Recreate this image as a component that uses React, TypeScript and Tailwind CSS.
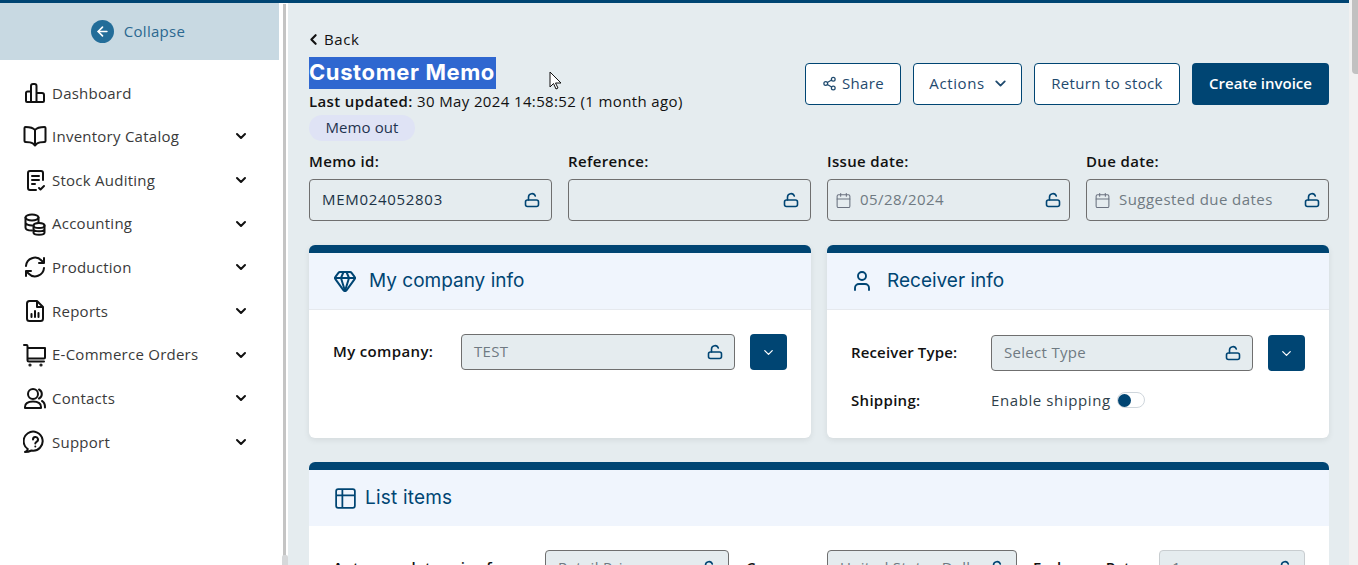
import React from "react";
import { ArrowLeft, ChevronDown, ChevronLeft, Calendar, Share2, Gem, User, Table2 } from "lucide-react";

function Ic({ children }: { children: React.ReactNode }) {
  return (
    <svg width="24" height="24" viewBox="0 0 24 24" fill="none" stroke="#111" strokeWidth="2" strokeLinecap="round" strokeLinejoin="round" className="shrink-0">
      {children}
    </svg>
  );
}

function Lock() {
  return (
    <svg width="16" height="16" viewBox="0 0 16 16" fill="none" stroke="#004573" strokeWidth="1.6" strokeLinecap="round" strokeLinejoin="round" className="shrink-0">
      <rect x="1.500" y="8" width="13" height="6.500" rx="2" />
      <path d="M4.500 8V5a3.500 3.500 0 0 1 6.800-1" />
    </svg>
  );
}

const nav: { label: string; icon: React.ReactNode; chev: boolean }[] = [
  { label: "Dashboard", chev: false, icon: <Ic><path d="M3 20V12a1.500 1.500 0 0 1 1.500-1.500H8V21H4a1 1 0 0 1-1-1ZM8 21V5a2 2 0 0 1 2-2h1.500a2 2 0 0 1 2 2v16ZM13.500 12H19a2 2 0 0 1 2 2v6a1 1 0 0 1-1 1h-6.500" /></Ic> },
  { label: "Inventory Catalog", chev: true, icon: <Ic><path d="M12 6C10 3.500 7 3 2.500 3a1 1 0 0 0-1 1v13a1 1 0 0 0 1 1c3.500 0 6 .5 7.500 1.500l2 2 2-2c1.500-1 4-1.500 7.500-1.500a1 1 0 0 0 1-1V4a1 1 0 0 0-1-1C17 3 14 3.500 12 6ZM12 6v15" /></Ic> },
  { label: "Stock Auditing", chev: true, icon: <Ic><path d="M20 12V5a2 2 0 0 0-2-2H7a2 2 0 0 0-2 2v15a2 2 0 0 0 2 2h6M9 8h7M9 12h7M9 16h3M16 20l1.500 1.500L21 18" /></Ic> },
  { label: "Accounting", chev: true, icon: <Ic><ellipse cx="9" cy="5.500" rx="6.500" ry="3" /><path d="M2.500 5.500v10c0 1.600 2.500 3 6.500 3M2.500 10.500c0 1.600 3 3 6.500 3M15.500 5.500v5" /><ellipse cx="16" cy="13.500" rx="5.500" ry="2.600" /><path d="M10.500 13.500v7c0 1.300 2.500 2.300 5.500 2.300s5.500-1 5.500-2.300v-7M10.500 17c0 1.300 2.500 2.300 5.500 2.300s5.500-1 5.500-2.300" /></Ic> },
  { label: "Production", chev: true, icon: <Ic><path d="M3 11a9 9 0 0 1 15.500-5.500L21 8M21 3v5h-5M21 13a9 9 0 0 1-15.500 5.500L3 16M3 21v-5h5" /></Ic> },
  { label: "Reports", chev: true, icon: <Ic><path d="M14 2H6.500A2.500 2.500 0 0 0 4 4.500v15A2.500 2.500 0 0 0 6.500 22h11a2.500 2.500 0 0 0 2.500-2.500V8ZM14 2v6h6M8.500 18v-3M12 18v-6M15.500 18v-4" /></Ic> },
  { label: "E-Commerce Orders", chev: true, icon: <Ic><path d="M1 2h2.500a1 1 0 0 1 1 1v14a1.500 1.500 0 0 0 1.500 1.500h15M4.500 5H22v9.500a1 1 0 0 1-1 1H4.500" /><circle cx="7" cy="22" r=".6" fill="#111" /><circle cx="18" cy="22" r=".6" fill="#111" /></Ic> },
  { label: "Contacts", chev: true, icon: <Ic><circle cx="10" cy="8" r="5" /><path d="M2 22v-1c0-3.500 3-5.500 8-5.500s8 2 8 5.500v1ZM16 3.500a5 5 0 0 1 0 9M19 15c2 1 3 3 3 6.500" /></Ic> },
  { label: "Support", chev: true, icon: <Ic><path d="M2 22c1.500-.5 2.500-1.500 2.800-3A9.500 9.500 0 1 1 8.500 20.500C6.500 21.500 4 22 2 22Z" /><path d="M10 9.500a2.500 2.500 0 1 1 3.500 2.300c-.7.4-1.200.9-1.200 1.700M12.300 16.500v.01" /></Ic> },
];

function Field({ label, value, calendar, muted }: { label: string; value: string; calendar?: boolean; muted?: boolean }) {
  return (
    <div className="w-[243px] shrink-0">
      <div className="h-[22px] text-[15px] leading-[22px] font-semibold text-[#111] tracking-[0.35px]">{label}</div>
      <div className={`mt-[7px] h-[42px] rounded-[4px] border border-[#6f6f6f] flex items-center pl-3 ${calendar ? "pr-[8px]" : "pr-[11px]"}`}>
        {calendar && <Calendar size={17} strokeWidth={1.5} className="text-[#6b7280] mr-[8px] -ml-[5px] shrink-0" />}
        <span className={`flex-1 truncate pb-[2px] text-[15px] ${calendar ? "tracking-[0.45px]" : "tracking-[0.7px]"} ${muted ? "text-[#6f7a82]" : "text-[#1c3346]"}`}>{value}</span>
        <Lock />
      </div>
    </div>
  );
}

function Btn({ children, w }: { children: React.ReactNode; w: string }) {
  return (
    <button className={`${w} h-[42px] pb-[2px] rounded-[4px] border border-[#004573] bg-white text-[#1f4a6e] text-[15px] tracking-[0.35px] flex items-center justify-center`}>
      {children}
    </button>
  );
}

function SelectRow({ label, value, labelW, boxW, track }: { label: string; value: string; labelW: string; boxW: string; track: string }) {
  return (
    <div className="flex items-center">
      <div className={`${labelW} ${track} shrink-0 pb-[2px] text-[15px] font-semibold text-[#111]`}>{label}</div>
      <div className={`${boxW} h-[36px] shrink-0 rounded-[4px] border border-[#6f6f6f] bg-[#e5ecef] flex items-center pl-3 pr-[11px]`}>
        <span className="flex-1 pb-[2px] text-[15px] text-[#6f7a82] tracking-[0.3px]">{value}</span>
        <Lock />
      </div>
      <div className="ml-[15px] w-[37px] h-[36px] rounded-[4px] bg-[#004573] flex items-center justify-center">
        <ChevronDown size={15} strokeWidth={2} className="text-white" />
      </div>
    </div>
  );
}

function CardHead({ icon, title, h, gap, track }: { icon: React.ReactNode; title: string; h: string; gap: string; track?: string }) {
  return (
    <div className={`${h} bg-[#f0f5fd] flex items-center pl-6 ${gap}`}>
      {icon}
      <span className={`text-[#004573] text-[19px] ${track ?? ""}`} style={{ fontFamily: '"Inter", sans-serif', fontWeight: 400 }}>{title}</span>
    </div>
  );
}

function MiniInput({ value, w, light }: { value: string; w: string; light?: boolean }) {
  return (
    <div className={`${w} h-[36px] shrink-0 rounded-[4px] border ${light ? "border-[#c8cdd0]" : "border-[#6f6f6f]"} bg-[#e5ecef] flex items-center pl-3 pr-[11px] gap-[6px]`}>
      <span className="flex-1 min-w-0 pb-[2px] overflow-hidden whitespace-nowrap text-[15px] text-[#6f7a82] tracking-[0.3px]">{value}</span>
      <Lock />
    </div>
  );
}

export default function App() {
  return (
    <div className="relative w-[1358px] h-[565px] overflow-hidden flex flex-col bg-[#e5ecef] text-[#111]" style={{ fontFamily: '"Open Sans", "Noto Sans", sans-serif' }}>
      <div className="h-[3px] shrink-0 bg-[#004573]" />
      <div className="flex flex-1 min-h-0">
        <aside className="w-[288px] shrink-0 flex bg-white">
          <div className="w-[279px] shrink-0">
            <div className="h-[57px] bg-[#c8d9e2] flex items-center justify-center gap-[10px] pr-[3px]">
              <span className="w-[23px] h-[23px] rounded-full bg-[#236d99] flex items-center justify-center">
                <ArrowLeft size={15} strokeWidth={2.6} className="text-white" />
              </span>
              <span className="text-[15px] text-[#2b6890] tracking-[0.3px]">Collapse</span>
            </div>
            <nav className="pt-[11px] pl-[23px] pr-[30px]">
              {nav.map((n) => (
                <div key={n.label} className="h-[43.625px] flex items-center">
                  <span className="w-[29px] shrink-0">{n.icon}</span>
                  <span className="flex-1 text-[15px] text-[#3a3a3a] tracking-[0.25px]">{n.label}</span>
                  {n.chev && <ChevronDown size={16} strokeWidth={3} className="text-[#111]" />}
                </div>
              ))}
            </nav>
          </div>
          <div className="w-[9px] relative bg-white">
            <div className="absolute left-[4px] top-[1px] bottom-0 w-[3px] bg-[#c4c4c4]" />
            <div className="absolute left-[3px] bottom-0 h-[10px] w-[6px] rounded-t-[2px] bg-[#d6d8da]" />
          </div>
        </aside>
        <main className="flex-1 min-w-0 pl-[21px] pr-[29px] relative">
          <div className="pt-[26px] h-[54px] flex items-start text-[15px] leading-[20px] text-[#111] tracking-[0.6px]">
            <ChevronLeft size={17} strokeWidth={3} className="mr-[2px] -ml-[4px] mt-[2px]" />Back
          </div>
          <div className="flex justify-between">
            <div>
              <div className="h-[32px] w-[187px] bg-[#2f67d0] text-white font-bold text-[22px] leading-[30px] tracking-[0.6px] whitespace-nowrap" style={{ fontFamily: '"Inter", sans-serif' }}>Customer Memo</div>
              <div className="mt-[2px] h-[20px] text-[15px] leading-[20px] text-[#111] tracking-[0.37px]"><span className="font-semibold">Last updated:</span> 30 May 2024 14:58:52 (1 month ago)</div>
              <div className="mt-[4px] w-[106px] h-[26px] pb-[2px] rounded-full bg-[#dfe3f5] text-[#1f3350] text-[15px] flex items-center justify-center tracking-[0.1px]">Memo out</div>
            </div>
            <div className="flex gap-3 pt-[6px]">
              <Btn w="w-[96px]"><Share2 size={15} strokeWidth={2} className="mr-[5px]" />Share</Btn>
              <Btn w="w-[109px]"><span className="pl-[3px] tracking-[0.6px]">Actions</span><ChevronDown size={17} strokeWidth={2.6} className="ml-[7px]" /></Btn>
              <Btn w="w-[146px]">Return to stock</Btn>
              <button className="w-[137px] h-[42px] pb-[2px] rounded-[4px] bg-[#004573] text-white text-[15px] font-semibold">Create invoice</button>
            </div>
          </div>
          <div className="mt-[9px] flex gap-[16px]">
            <Field label="Memo id:" value="MEM024052803" />
            <Field label="Reference:" value="" />
            <Field label="Issue date:" value="05/28/2024" calendar muted />
            <Field label="Due date:" value="Suggested due dates" calendar muted />
          </div>
          <div className="mt-[24px] flex gap-[16px]">
            <section className="w-[502px] h-[193px] rounded-[6px] bg-white shadow-[0_2px_6px_rgba(0,0,0,0.08)] overflow-hidden border-t-[8px] border-[#004573]">
              <CardHead h="h-[57px] border-b border-[#e6e9ee]" gap="gap-[12px]" title="My company info" icon={<Gem size={24} strokeWidth={2} className="text-[#004573]" />} />
              <div className="pt-[24px] px-6">
                <SelectRow label="My company:" value="TEST" labelW="w-[128px]" boxW="w-[274px]" track="tracking-[0.35px]" />
              </div>
            </section>
            <section className="w-[502px] h-[193px] rounded-[6px] bg-white shadow-[0_2px_6px_rgba(0,0,0,0.08)] overflow-hidden border-t-[8px] border-[#004573]">
              <CardHead h="h-[57px] border-b border-[#e6e9ee]" gap="gap-[12px]" title="Receiver info" icon={<User size={24} strokeWidth={1.9} className="text-[#004573] -ml-[1px] mr-[1px]" />} />
              <div className="pt-[25px] px-6">
                <SelectRow label="Receiver Type:" value="Select Type" labelW="w-[140px]" boxW="w-[262px]" track="tracking-[0.15px]" />
                <div className="mt-[18px] flex items-center">
                  <div className="w-[140px] text-[15px] font-semibold text-[#111] tracking-[0.3px]">Shipping:</div>
                  <span className="text-[15px] text-[#2f3f4a] tracking-[0.6px]">Enable shipping</span>
                  <span className="ml-[6px] w-[28px] h-[16px] rounded-full border border-[#cfd6dc] bg-white flex items-center">
                    <span className="w-[13px] h-[13px] rounded-full bg-[#004573]" />
                  </span>
                </div>
              </div>
            </section>
          </div>
          <section className="mt-[24px] w-[1020px] rounded-[6px] bg-white overflow-hidden border-t-[8px] border-[#004573]">
            <CardHead h="h-[56px]" gap="gap-[7px]" track="tracking-[0.2px]" title="List items" icon={<Table2 size={25} strokeWidth={1.7} className="text-[#004573]" />} />
            <div className="pt-[24px] pl-6 flex items-center">
              <div className="w-[212px] shrink-0 pb-[2px] text-[15px] font-semibold text-[#111] tracking-[0.3px]">Auto populate price from:</div>
              <MiniInput value="Retail Price" w="w-[184px]" />
              <div className="ml-[17px] w-[81px] shrink-0 pb-[2px] text-[15px] font-semibold text-[#111]">Currency:</div>
              <MiniInput value="United States Dollar" w="w-[190px]" />
              <div className="ml-[16px] w-[126px] shrink-0 pb-[2px] text-[15px] font-semibold text-[#111]">Exchange Rate:</div>
              <MiniInput value="1" w="w-[146px]" light />
            </div>
          </section>
          <svg className="absolute left-[261px] top-[68px]" width="14" height="21" viewBox="0 0 14 21"><path d="M1 1v15l3.500-3.500L7 18l2-1-2.500-5H12Z" fill="#fff" stroke="#111" strokeWidth="1" /></svg>
        </main>
      </div>
      <div className="absolute right-0 top-0 h-[565px] w-[9px] bg-[#f1f1f1]">
        <div className="ml-[3px] h-[74px] w-[6px] rounded-bl-[4px] bg-[#c1c1c1]" />
      </div>
    </div>
  );
}
